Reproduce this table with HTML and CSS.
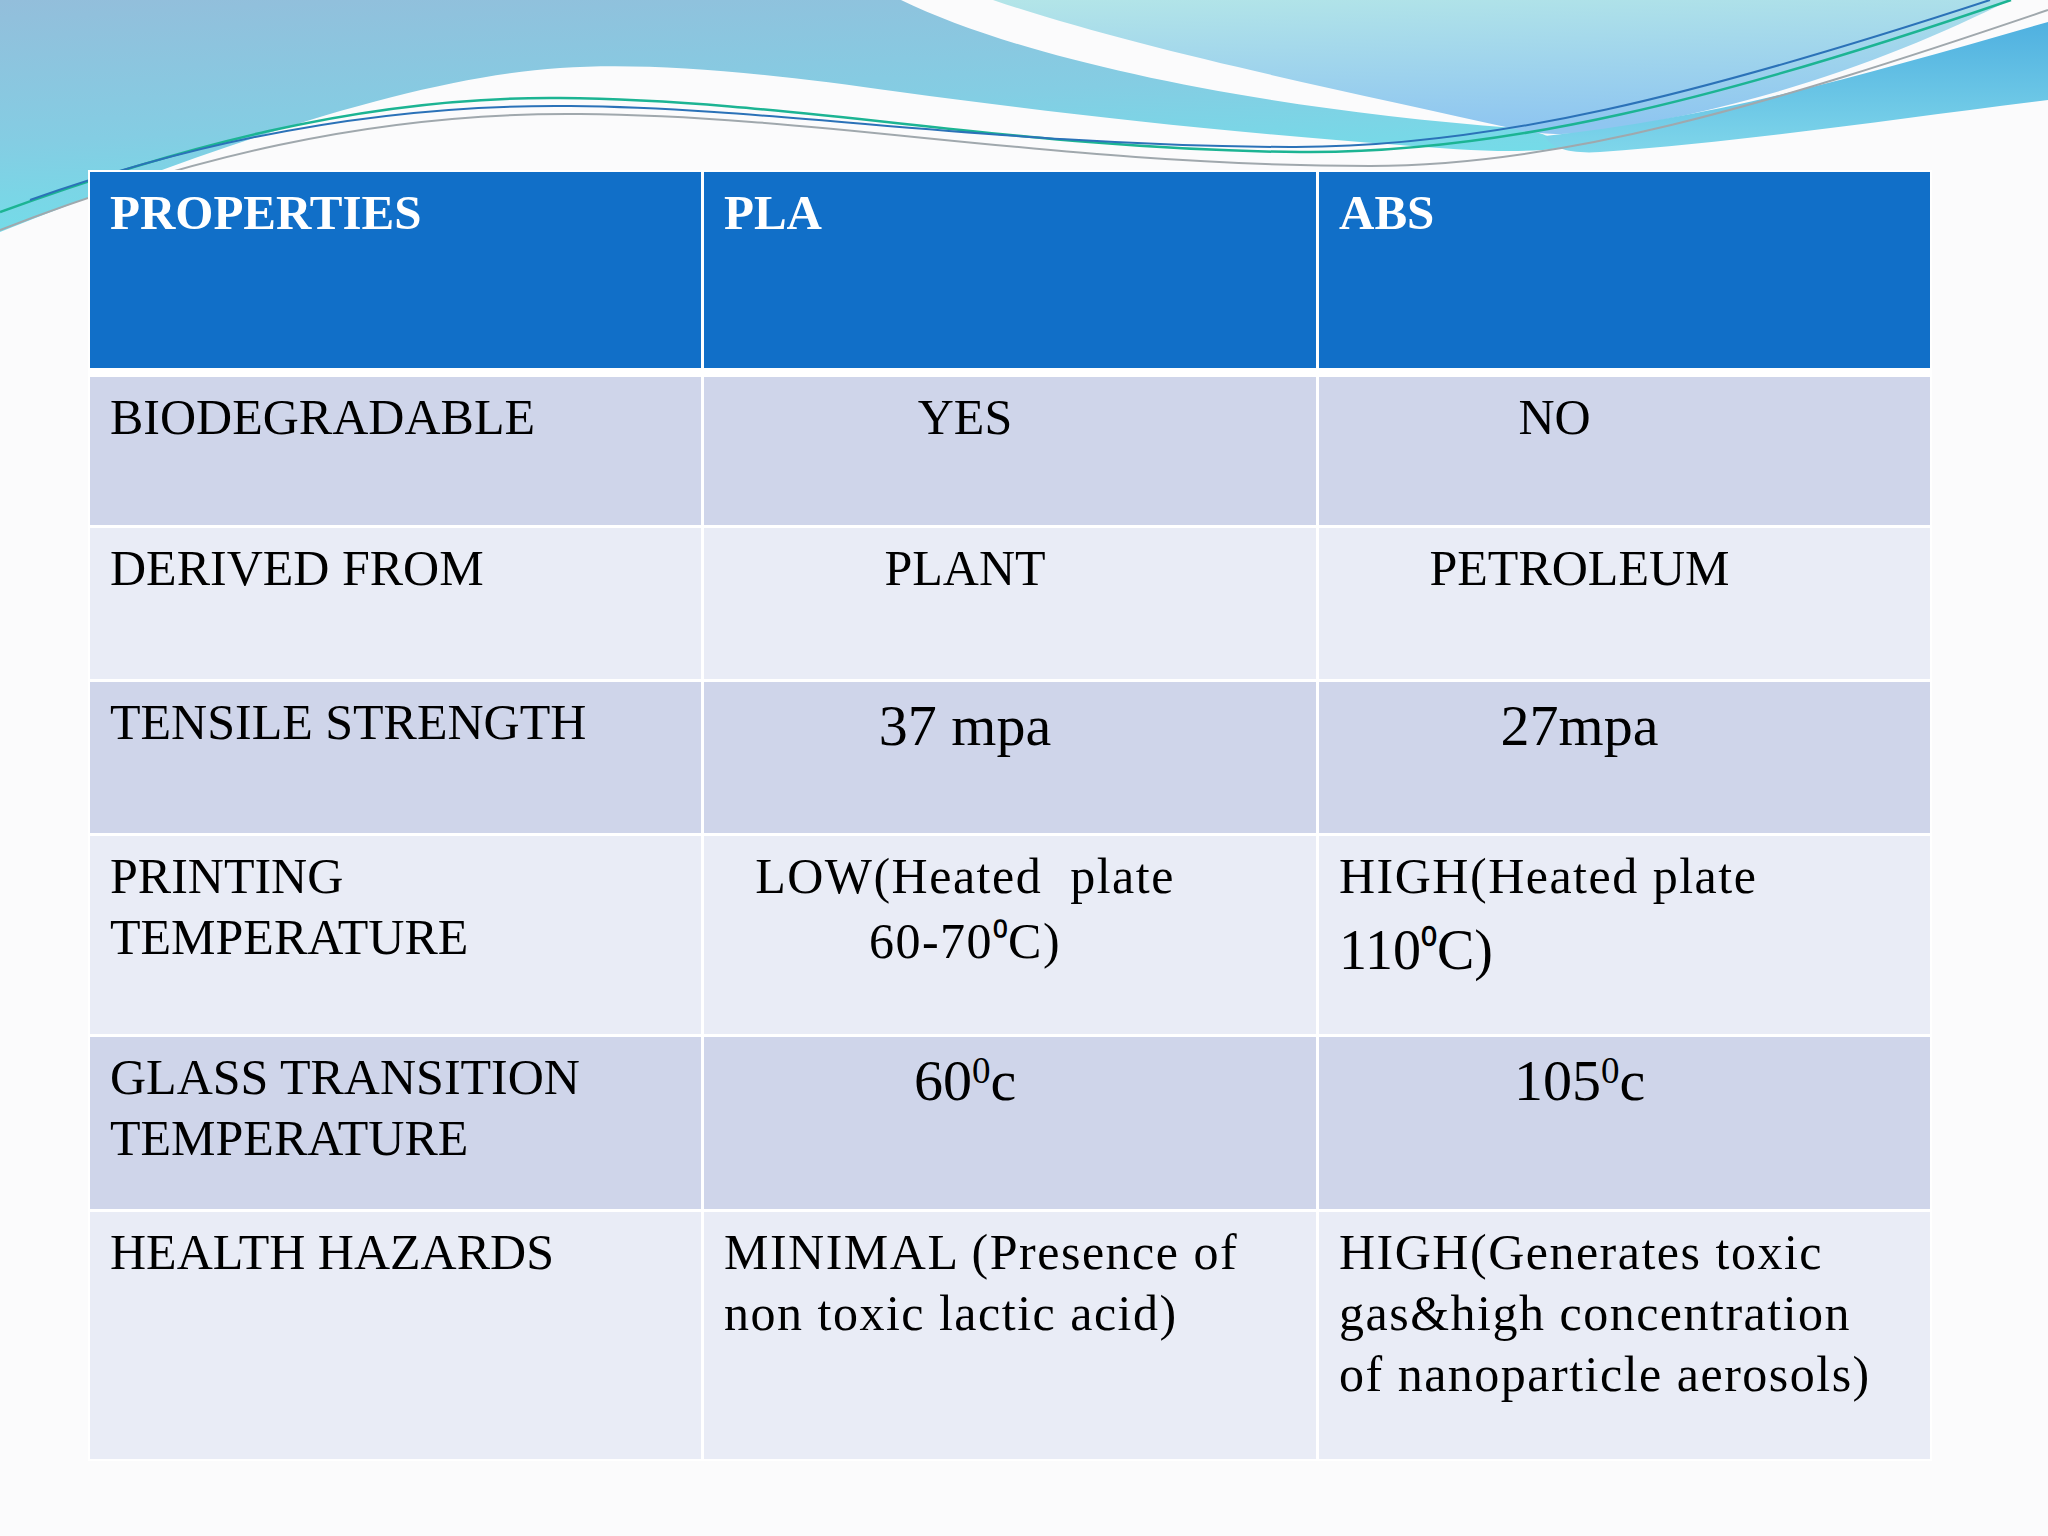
FILE: index.html
```html
<!DOCTYPE html>
<html lang="en">
<head>
<meta charset="utf-8">
<title>PLA vs ABS</title>
<link rel="stylesheet" href="styles.css">
</head>
<body>
<div class="slide">
  <svg class="waves" width="2048" height="260" viewBox="0 0 2048 260" xmlns="http://www.w3.org/2000/svg">
    <defs>
      <linearGradient id="gL" x1="0" y1="0" x2="0.35" y2="1">
        <stop offset="0" stop-color="#93bedb"/>
        <stop offset="0.55" stop-color="#84cde3"/>
        <stop offset="1" stop-color="#6fe0ea"/>
      </linearGradient>
      <linearGradient id="gR" x1="0" y1="0" x2="0.2" y2="1">
        <stop offset="0" stop-color="#b3e5e8"/>
        <stop offset="1" stop-color="#8fc6f0"/>
      </linearGradient>
      <linearGradient id="gB" x1="0" y1="0" x2="0" y2="1">
        <stop offset="0" stop-color="#4fb0e0"/>
        <stop offset="1" stop-color="#7fd6ea"/>
      </linearGradient>
    </defs>
    <path d="M0,0 H901 C1020,58 1250,108 1515,128 C1545,132 1560,140 1560,148 C1520,154 1460,150 1400,145 C1200,130 1050,112 900,92 C760,72 650,62 560,68 C420,77 230,140 0,232 Z" fill="url(#gL)"/>
    <path d="M993,0 H2010 C1900,55 1760,108 1590,132 C1560,136 1530,133 1515,129 C1350,92 1140,50 993,0 Z" fill="url(#gR)"/>
    <path d="M1545,136 C1720,118 1880,70 2048,22 V100 C1900,118 1760,140 1600,152 C1570,154 1550,148 1545,136 Z" fill="url(#gB)"/>
    <path d="M0,212 C170,150 360,96 560,98 C800,100 1020,150 1300,152 C1500,154 1720,100 2011,0" fill="none" stroke="#1cb493" stroke-width="2.5"/>
    <path d="M30,200 C200,140 380,104 570,106 C780,108 1000,146 1290,147 C1490,148 1700,95 1990,0" fill="none" stroke="#2b72b8" stroke-width="2"/>
    <path d="M0,230 C180,160 370,112 580,114 C830,116 1060,166 1370,166 C1560,166 1760,108 2048,10" fill="none" stroke="#a0a8ad" stroke-width="2"/>
  </svg>

  <div class="table">
    <div class="cell head">PROPERTIES</div>
    <div class="cell head">PLA</div>
    <div class="cell head">ABS</div>

    <div class="cell dark">BIODEGRADABLE</div>
    <div class="cell dark mid">YES</div>
    <div class="cell dark mid left-nudge">NO</div>

    <div class="cell light">DERIVED FROM</div>
    <div class="cell light mid">PLANT</div>
    <div class="cell light mid">PETROLEUM</div>

    <div class="cell dark">TENSILE STRENGTH</div>
    <div class="cell dark mid big">37 mpa</div>
    <div class="cell dark mid big">27mpa</div>

    <div class="cell light">PRINTING<br>TEMPERATURE</div>
    <div class="cell light mid mixed">
      <div class="line">LOW(Heated&nbsp; plate</div>
      <div class="line second">60-70<span class="sdeg">⁰</span>C)</div>
    </div>
    <div class="cell light mixed">
      <div class="line">HIGH(Heated plate</div>
      <div class="line second large">110<span class="sdeg">⁰</span>C)</div>
    </div>

    <div class="cell dark">GLASS TRANSITION<br>TEMPERATURE</div>
    <div class="cell dark mid big">60<sup class="deg">0</sup>c</div>
    <div class="cell dark mid big">105<sup class="deg">0</sup>c</div>

    <div class="cell light">HEALTH HAZARDS</div>
    <div class="cell light mixed">MINIMAL (Presence of<br>non toxic lactic acid)</div>
    <div class="cell light mixed">HIGH(Generates toxic<br>gas&amp;high concentration<br>of nanoparticle aerosols)</div>
  </div>
</div>
</body>
</html>
```

FILE: styles.css
```css
html, body {
  margin: 0;
  padding: 0;
  background: #fbfbfc;
}

.slide {
  position: relative;
  width: 2048px;
  height: 1536px;
  overflow: hidden;
  background: #fbfbfc;
  font-family: "Liberation Serif", "Times New Roman", serif;
  color: #000;
}

.waves {
  position: absolute;
  top: 0;
  left: 0;
  display: block;
}

.table {
  position: relative;
  margin: 172px 0 0 90px;
  width: 1840px;
  display: grid;
  grid-template-columns: 611px 612px 611px;
  grid-template-rows: 202px 148px 151px 151px 198px 172px 247px;
  gap: 3px;
  background: #ffffff;
  box-shadow: 0 0 0 2px #ffffff;
}

.cell {
  box-sizing: border-box;
  padding: 10px 20px 0 20px;
  font-size: 50px;
  line-height: 61px;
  white-space: nowrap;
}

.head {
  background: #116fc8;
  color: #ffffff;
  font-weight: bold;
  font-size: 49px;
  border-bottom: 6px solid #ffffff;
}

.dark {
  background: #cfd5ea;
}

.light {
  background: #e9ecf6;
}

.mid {
  text-align: center;
  padding-right: 110px;
}

.left-nudge {
  padding-right: 160px;
}

.mixed {
  letter-spacing: 1.5px;
}

.big {
  font-size: 58px;
  padding-top: 13px;
}

.deg {
  font-size: 37px;
  line-height: 0;
  vertical-align: 17px;
}

.sdeg {
  font-size: 42px;
  line-height: 0;
  vertical-align: 3px;
  letter-spacing: 0;
}

.line {
  display: block;
}

.second {
  margin-top: 4px;
}

.large {
  font-size: 56px;
  margin-top: 13px;
  letter-spacing: 0;
}

.large .sdeg {
  font-size: 46px;
  vertical-align: 4px;
}
```
